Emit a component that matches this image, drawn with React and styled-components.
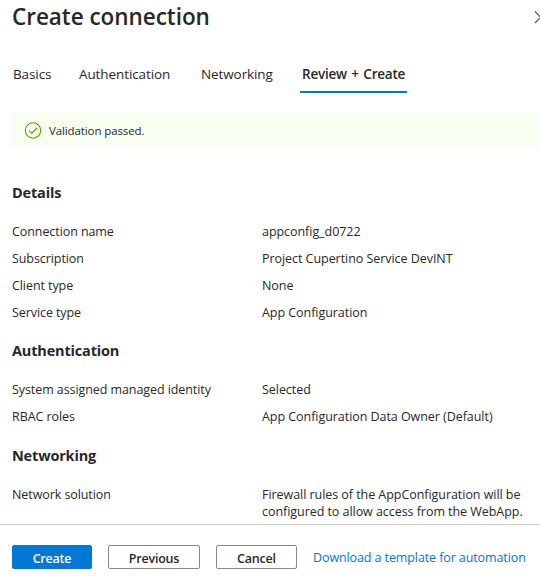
import React from "react";
import styled, { createGlobalStyle, css } from "styled-components";

const GlobalStyle = createGlobalStyle`
  * { box-sizing: border-box; }
  html, body { margin: 0; padding: 0; overflow: hidden; background: #fff; }
  body { font-family: "Open Sans", "Noto Sans", sans-serif; color: #292827; }
`;

const Panel = styled.main`
  display: flex;
  flex-direction: column;
  width: 540px;
  height: 584px;
  overflow: hidden;
  background: #fff;
`;

const Header = styled.header`
  display: flex;
  justify-content: space-between;
  height: 58px;
  padding-left: 12px;
`;

const Title = styled.h1`
  margin: 0;
  font-size: 22.5px;
  font-weight: 600;
  line-height: 34px;
  letter-spacing: -0.04px;
  white-space: nowrap;
`;

const CloseButton = styled.button`
  flex: none;
  width: 7px;
  height: 34px;
  padding: 0;
  border: 0;
  background: none;
  overflow: hidden;

  svg { display: block; }
`;

const TabList = styled.nav`
  display: flex;
  height: 35px;
  padding-left: 11px;
`;

const Tab = styled.a`
  flex: none;
  width: ${(p) => p.$width}px;
  height: 35px;
  margin-right: ${(p) => p.$gap || 0}px;
  padding-left: 2px;
  font-size: 13.5px;
  line-height: 32px;
  letter-spacing: -0.1px;
  white-space: nowrap;
  ${(p) =>
    p.$active &&
    css`
      font-weight: 600;
      letter-spacing: -0.22px;
      word-spacing: 1.2px;
      border-bottom: 2px solid #0078d4;
    `}
`;

const Banner = styled.div`
  display: flex;
  align-items: center;
  gap: 8px;
  height: 34px;
  margin: 20px 0 21px 12px;
  padding-left: 12px;
  background: #f8fff0;
  font-size: 11.5px;
  letter-spacing: -0.11px;

  svg { flex: none; }
`;

const Content = styled.section`
  flex: none;
  height: 356px;
  padding-left: 12px;
`;

const SectionTitle = styled.h2`
  height: ${(p) => p.$height || 50}px;
  margin: 0;
  font-size: 14.5px;
  font-weight: 700;
  line-height: ${(p) => p.$height || 50}px;
  letter-spacing: -0.17px;
`;

const Row = styled.div`
  display: grid;
  grid-template-columns: 250px 278px;
  padding: 5px 0;
  font-size: 12.5px;
  line-height: 17px;
  white-space: pre-line;
`;

const Cell = styled.div`
  letter-spacing: ${(p) => (p.$label ? -0.08 : -0.05)}px;
`;

const Footer = styled.footer`
  display: flex;
  align-items: flex-start;
  gap: 16px;
  height: 60px;
  padding: 20px 0 0 12px;
  border-top: 1px solid #ccc;
`;

const Button = styled.button`
  flex: none;
  width: ${(p) => p.$width}px;
  height: 24px;
  padding: 3px 0 0;
  border: 1px solid ${(p) => (p.$primary ? "#0078d4" : "#8a8886")};
  border-radius: 2px;
  background: ${(p) => (p.$primary ? "#0078d4" : "#fff")};
  color: ${(p) => (p.$primary ? "#fff" : "#292827")};
  font: 600 12.5px/20px "Open Sans", "Noto Sans", sans-serif;
  letter-spacing: -0.2px;
`;

const Link = styled.a`
  color: #0078d4;
  font-size: 12.5px;
  line-height: 26px;
  letter-spacing: -0.1px;
  white-space: nowrap;
`;

const sections = [
  {
    title: "Details",
    rows: [
      ["Connection name", "appconfig_d0722"],
      ["Subscription", "Project Cupertino Service DevINT"],
      ["Client type", "None"],
      ["Service type", "App Configuration"],
    ],
  },
  {
    title: "Authentication",
    rows: [
      ["System assigned managed identity", "Selected"],
      ["RBAC roles", "App Configuration Data Owner (Default)"],
    ],
  },
  {
    title: "Networking",
    height: 51,
    rows: [
      [
        "Network solution",
        "Firewall rules of the AppConfiguration will be\nconfigured to allow access from the WebApp.",
      ],
    ],
  },
];

export default function App() {
  return (
    <Panel>
      <GlobalStyle />
      <Header>
        <Title>Create connection</Title>
        <CloseButton aria-label="Close">
          <svg width="14" height="34" fill="none" stroke="#4a4a4a" strokeWidth="1.1">
            <path d="M2 11.5 13.5 23M13.5 11.5 2 23" />
          </svg>
        </CloseButton>
      </Header>
      <TabList>
        <Tab $width={41} $gap={25}>Basics</Tab>
        <Tab $width={95} $gap={27}>Authentication</Tab>
        <Tab $width={76} $gap={25}>Networking</Tab>
        <Tab $width={107} $active>Review + Create</Tab>
      </TabList>
      <Banner>
        <svg width="17" height="17" fill="none" stroke="#57a300" strokeWidth="1.1">
          <circle cx="9" cy="8.5" r="7.7" />
          <path d="M5 8.7 7.8 11.4 13 6" />
        </svg>
        <span>Validation passed.</span>
      </Banner>
      <Content>
        {sections.map((s) => (
          <React.Fragment key={s.title}>
            <SectionTitle $height={s.height}>{s.title}</SectionTitle>
            {s.rows.map(([label, value]) => (
              <Row key={label}>
                <Cell $label>{label}</Cell>
                <Cell>{value}</Cell>
              </Row>
            ))}
          </React.Fragment>
        ))}
      </Content>
      <Footer>
        <Button $width={80} $primary>Create</Button>
        <Button $width={92}>Previous</Button>
        <Button $width={81}>Cancel</Button>
        <Link>Download a template for automation</Link>
      </Footer>
    </Panel>
  );
}
